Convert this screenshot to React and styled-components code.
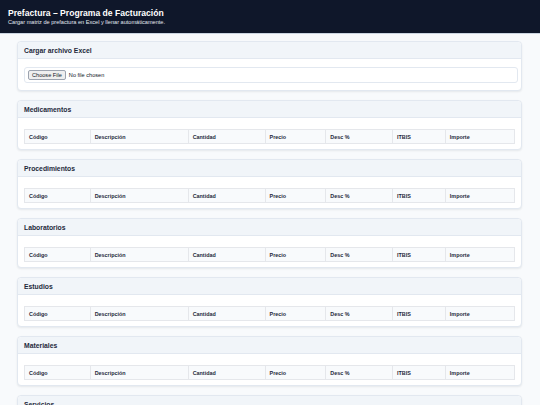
import React from "react";
import styled, { createGlobalStyle } from "styled-components";

const sections = [
  "Medicamentos",
  "Procedimientos",
  "Laboratorios",
  "Estudios",
  "Materiales",
  "Servicios",
];

const columns = [
  { label: "Código", width: "13.4%" },
  { label: "Descripción", width: "20%" },
  { label: "Cantidad", width: "15.7%" },
  { label: "Precio", width: "12.4%" },
  { label: "Desc %", width: "13.6%" },
  { label: "ITBIS", width: "10.8%" },
  { label: "Importe", width: "14.1%" },
];

const GlobalStyle = createGlobalStyle`
  * { box-sizing: border-box; }
  body {
    margin: 0;
    background: #f8fafc;
    font-family: "Liberation Sans", Arial, sans-serif;
    color: #1e293b;
  }
`;

const App = () => {
  return (
    <>
      <GlobalStyle />
      <TopBar>
        <Title>Prefactura – Programa de Facturación</Title>
        <Subtitle>
          Cargar matriz de prefactura en Excel y llenar automáticamente.
        </Subtitle>
      </TopBar>
      <Main>
        <Card>
          <CardHeader>Cargar archivo Excel</CardHeader>
          <CardBody>
            <FileInput type="file" accept=".xlsx,.xls" />
          </CardBody>
        </Card>
        {sections.map((name) => (
          <Card key={name}>
            <CardHeader>{name}</CardHeader>
            <CardBody>
              <Table>
                <thead>
                  <tr>
                    {columns.map((col) => (
                      <HeadCell key={col.label} style={{ width: col.width }}>
                        {col.label}
                      </HeadCell>
                    ))}
                  </tr>
                </thead>
                <tbody />
              </Table>
            </CardBody>
          </Card>
        ))}
      </Main>
    </>
  );
};

const TopBar = styled.header`
  background: #0f172a;
  color: #ffffff;
  height: 34px;
  padding: 8px 8px 0;
  border-bottom: 1px solid #cbd5e1;
`;

const Title = styled.h1`
  margin: 0;
  font-size: 8.6px;
  font-weight: 700;
  line-height: 11px;
`;

const Subtitle = styled.p`
  margin: 0;
  font-size: 5.6px;
  line-height: 7px;
  color: #e2e8f0;
`;

const Main = styled.main`
  display: flex;
  flex-direction: column;
  gap: 9px;
  padding: 7px 17px 20px 17px;
  width: 539px;
`;

const Card = styled.section`
  background: #ffffff;
  border: 1px solid #e2e8f0;
  border-radius: 4px;
  box-shadow: 0 1px 2px rgba(15, 23, 42, 0.08);
`;

const CardHeader = styled.h2`
  margin: 0;
  height: 17px;
  display: flex;
  align-items: center;
  padding: 0 6px;
  background: #f1f5f9;
  border-bottom: 1px solid #e2e8f0;
  border-radius: 4px 4px 0 0;
  font-size: 6.8px;
  font-weight: 700;
  color: #1e293b;
`;

const CardBody = styled.div`
  padding: 7px 6px 5px;
`;

const FileInput = styled.input`
  display: block;
  width: calc(100% + 3px);
  height: 16px;
  margin: 1px 0 2px;
  padding: 2px 3px;
  border: 1px solid #e2e8f0;
  border-radius: 3px;
  background: #ffffff;
  font-family: "Liberation Sans", Arial, sans-serif;
  font-size: 5.6px;
  color: #111827;

  &::file-selector-button {
    font-family: "Liberation Sans", Arial, sans-serif;
    font-size: 5.6px;
    height: 10px;
    padding: 0 3px;
    margin-right: 3px;
    border: 1px solid #9ca3af;
    border-radius: 2px;
    background: #efefef;
    color: #111827;
  }
`;

const Table = styled.table`
  width: 100%;
  margin-top: 4px;
  border-collapse: collapse;
  table-layout: fixed;
`;

const HeadCell = styled.th`
  height: 14px;
  padding: 0 4px;
  text-align: left;
  font-size: 5.4px;
  font-weight: 700;
  color: #1e293b;
  background: #f8fafc;
  border: 1px solid #e5e7eb;
`;

export default App;
